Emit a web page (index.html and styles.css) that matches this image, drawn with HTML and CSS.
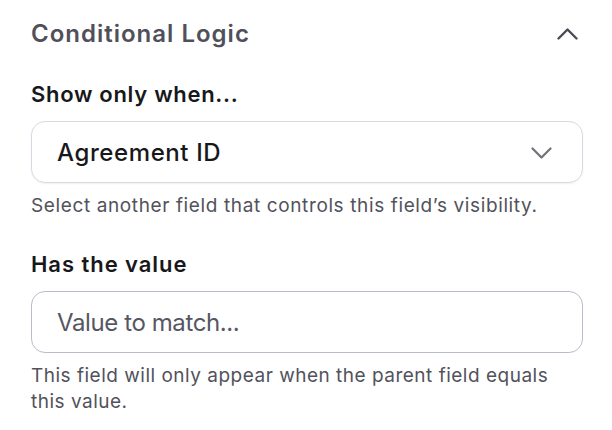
FILE: index.html
```html
<!DOCTYPE html>
<html lang="en">
<head>
<meta charset="utf-8">
<title>Conditional Logic</title>
<link rel="stylesheet" href="styles.css">
</head>
<body>
<section class="panel">
  <header class="panel-head">
    <h2 class="panel-title">Conditional Logic</h2>
    <button class="collapse" type="button" aria-label="Collapse">
      <svg width="21" height="12" viewBox="0 0 21 12" fill="none"><polyline points="1.5,10.5 10.5,1.5 19.5,10.5" stroke="#4b4b57" stroke-width="2.4" stroke-linecap="round" stroke-linejoin="round"/></svg>
    </button>
  </header>

  <div class="field">
    <label class="field-label">Show only when...</label>
    <div class="select">
      <span class="select-value">Agreement ID</span>
      <svg class="select-chevron" width="21" height="12" viewBox="0 0 21 12" fill="none"><polyline points="1.5,1.5 10.5,10.5 19.5,1.5" stroke="#71717a" stroke-width="2.2" stroke-linecap="round" stroke-linejoin="round"/></svg>
    </div>
    <p class="hint hint-wide">Select another field that controls this field’s visibility.</p>
  </div>

  <div class="field field-second">
    <label class="field-label label-wide">Has the value</label>
    <div class="input"><span class="placeholder">Value to match...</span></div>
    <p class="hint">This field will only appear when the parent field equals this value.</p>
  </div>
</section>
</body>
</html>
```

FILE: styles.css
```css
* { box-sizing: border-box; }
html, body { margin: 0; padding: 0; background: #ffffff; }
body { font-family: Inter, "Noto Sans", sans-serif; color: #18181b; }

.panel {
  width: 612px;
  padding: 18px 29px 0 31px;
}

.panel-head {
  display: flex;
  justify-content: space-between;
  align-items: center;
  height: 32px;
}

.panel-title {
  margin: 0;
  font-size: 24px;
  line-height: 32px;
  font-weight: 600;
  color: #50505b;
  letter-spacing: 1px;
}

.collapse {
  border: 0;
  background: none;
  padding: 0;
  margin-right: 5px;
  display: flex;
}

.field { display: flex; flex-direction: column; margin-top: 30px; }
.field-second { margin-top: 30px; }

.field-label {
  font-size: 22px;
  line-height: 28px;
  font-weight: 600;
  color: #18181b;
  letter-spacing: 0.7px;
}

.label-wide { letter-spacing: 0.95px; }

.select, .input {
  margin-top: 13px;
  height: 62px;
  border-radius: 14px;
  display: flex;
  align-items: center;
  justify-content: space-between;
  padding: 2px 30px 0 25px;
  font-size: 24px;
  line-height: 28px;
}

.select {
  border: 1.5px solid #d7d9e3;
  box-shadow: 0 1px 2px rgba(20, 20, 40, 0.06);
}

.select-value {
  color: #18181b;
  font-weight: 500;
  letter-spacing: 0.6px;
}

.input {
  border: 1.5px solid #b9bccb;
}

.placeholder {
  color: #575762;
  letter-spacing: -0.4px;
}

.hint {
  margin: 10px 0 0;
  max-width: 540px;
  font-size: 19px;
  line-height: 26.5px;
  color: #52525b;
  letter-spacing: 0.5px;
}

.hint-wide { letter-spacing: 0.62px; }
```
